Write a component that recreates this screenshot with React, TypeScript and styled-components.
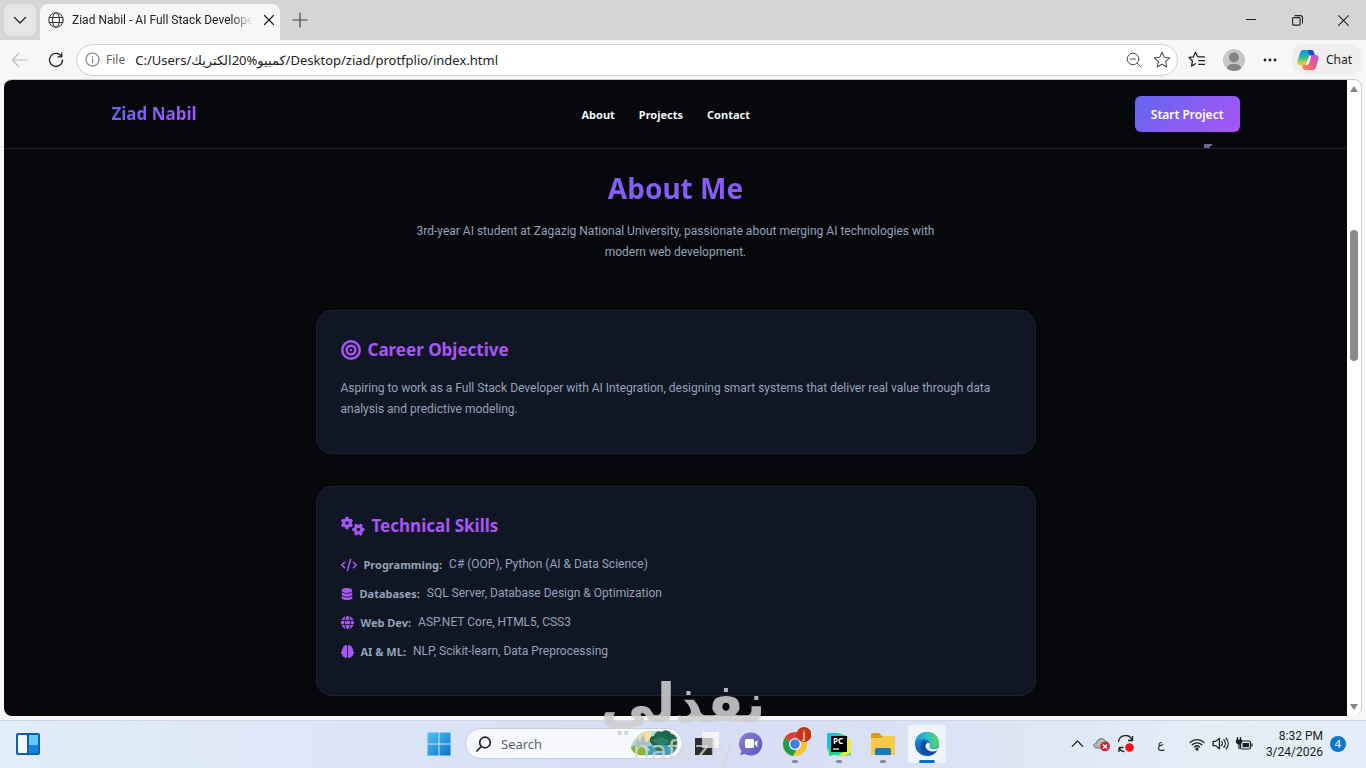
import React from "react";
import styled, { createGlobalStyle, css } from "styled-components";
import { FaBrain, FaBullseye, FaCode, FaDatabase, FaGears, FaGlobe } from "react-icons/fa6";

const ui = `"Noto Sans", "Open Sans", "DejaVu Sans", sans-serif`;
const reading = `Roboto, "Noto Sans", sans-serif`;
const accent = "#a855f7";
const gradient = "linear-gradient(135deg, #6366f1, #a855f7)";

const Global = createGlobalStyle`
  * { box-sizing: border-box; }
  body { margin: 0; font-family: ${ui}; overflow: hidden; }
  h1, h2, h3, p, ul { margin: 0; padding: 0; }
  button, input { font-family: inherit; }
  svg { display: block; flex: none; }
`;

const Desktop = styled.div`
  position: relative;
  height: 100vh;
  display: flex;
  flex-direction: column;
  background: #f7f7f7;
  overflow: hidden;
`;

/* ---------- browser chrome ---------- */

const TabStrip = styled.div`
  display: flex;
  height: 40px;
  flex: none;
  background: #d5d5d5;
  padding-left: 4px;
`;

const IconButton = styled.button<{ $w?: number; $h?: number; $bg?: string }>`
  display: flex;
  align-items: center;
  justify-content: center;
  flex: none;
  width: ${(p) => p.$w ?? 36}px;
  height: ${(p) => p.$h ?? 32}px;
  padding: 0;
  border: 0;
  border-radius: 8px;
  color: #222;
  background: ${(p) => p.$bg ?? "transparent"};
`;

const TabMenuSlot = styled.div`
  padding: 4px 4px 0 0;
`;

const Tab = styled.div`
  display: flex;
  align-items: center;
  gap: 8px;
  width: 240px;
  height: 36px;
  margin-top: 4px;
  padding: 0 8px 4px 8px;
  background: #f7f7f7;
  border-radius: 8px 8px 0 0;
`;

const TabTitle = styled.span`
  flex: 1;
  white-space: nowrap;
  font-family: ${reading};
  font-size: 12px;
  line-height: 20px;
  color: #222;
  mask-image: linear-gradient(90deg, #000 88%, transparent);
`;

const WindowControls = styled.div`
  display: flex;
  margin-left: auto;
`;

const Toolbar = styled.div`
  display: flex;
  align-items: center;
  height: 39px;
  flex: none;
  padding: 0 4px 0 2px;
`;

const AddressBar = styled.div`
  display: flex;
  align-items: center;
  flex: 1;
  height: 32px;
  margin-left: 2px;
  padding: 0 1px 0 8px;
  border: 1px solid #cfcfcf;
  border-radius: 16px;
  background: #fff;
`;

const Scheme = styled.label`
  display: flex;
  align-items: center;
  gap: 6px;
  font-size: 12px;
  color: #666;
`;

const UrlInput = styled.input`
  flex: 1;
  min-width: 0;
  border: 0;
  outline: 0;
  padding: 0;
  margin-left: 10px;
  background: transparent;
  font-size: 13px;
  color: #222;
`;

const ChatButton = styled.button`
  display: flex;
  align-items: center;
  gap: 7px;
  height: 31px;
  margin-left: 4px;
  padding: 0 10px 0 5px;
  border: 0;
  border-radius: 12px;
  background: #efefef;
  font-size: 12px;
  color: #222;
`;

/* ---------- web page ---------- */

const Viewport = styled.div`
  display: flex;
  flex: 1;
  min-height: 0;
  margin: 0 4px 4px;
  border-top: 1px solid #c9c9c9;
  border-right: 1px solid #d0d0d0;
  border-radius: 8px;
  overflow: hidden;
  background: #fff;
`;

const Page = styled.div`
  flex: 1;
  overflow: hidden;
  background: #06080c;
`;

const Header = styled.header`
  position: relative;
  display: flex;
  align-items: center;
  justify-content: space-between;
  height: 69px;
  padding: 0 8%;
  border-bottom: 1px solid #202329;
`;

const Brand = styled.a`
  font-size: 17px;
  line-height: 24px;
  font-weight: 700;
  text-decoration: none;
  color: transparent;
  background: ${gradient};
  background-clip: text;
`;

const Nav = styled.nav`
  display: flex;
  gap: 24px;
`;

const NavLink = styled.a`
  font-size: 11px;
  font-weight: 700;
  text-decoration: none;
  color: #f1f5f9;
`;

const StartButton = styled.button`
  height: 36px;
  padding: 0 16px;
  border: 0;
  border-radius: 6px;
  font-size: 12px;
  font-weight: 600;
  color: #fff;
  background: ${gradient};
`;

const PointerTrace = styled.svg`
  position: absolute;
  right: 135px;
  bottom: 0;
`;

const About = styled.section`
  display: flex;
  flex-direction: column;
  align-items: center;
  padding-top: 19px;
`;

const Title = styled.h1`
  width: 100%;
  text-align: center;
  font-size: 28px;
  line-height: 40px;
  font-weight: 700;
  color: transparent;
  background: ${gradient};
  background-clip: text;
`;

const bodyText = css`
  font-family: ${reading};
  font-size: 12px;
  line-height: 21px;
  color: #94a3b8;
`;

const Intro = styled.p`
  ${bodyText}
  max-width: 540px;
  margin: 13px 0 47px;
  text-align: center;
`;

const Card = styled.article`
  width: 720px;
  max-width: 90%;
  margin-bottom: 32px;
  padding: 24px 24px 33px 24px;
  border: 1px solid #1c2438;
  border-radius: 16px;
  background: #111625;
`;

const CardTitle = styled.h2`
  display: flex;
  align-items: center;
  gap: 7px;
  margin-bottom: 13px;
  font-size: 17px;
  line-height: 30px;
  font-weight: 700;
  color: ${accent};
`;

const CardText = styled.p`
  ${bodyText}
`;

const SkillList = styled.ul`
  display: flex;
  flex-direction: column;
  gap: 8px;
  list-style: none;
`;

const Skill = styled.li`
  ${bodyText}
  display: flex;
  align-items: center;
  gap: 7px;
  svg { color: ${accent}; }
  strong {
    font-family: ${ui};
    font-size: 11px;
    font-weight: 700;
  }
`;

const Scrollbar = styled.div`
  display: flex;
  flex-direction: column;
  align-items: center;
  width: 14px;
  padding: 5px 0;
`;

const Thumb = styled.div`
  width: 8px;
  flex: 0 0 21%;
  margin-top: 137px;
  margin-bottom: auto;
  border-radius: 4px;
  background: #8a8a8a;
`;

/* ---------- taskbar ---------- */

const Taskbar = styled.footer`
  display: grid;
  grid-template-columns: 1fr auto 1fr;
  align-items: center;
  height: 48px;
  flex: none;
  padding-bottom: 2px;
  border-top: 1px solid #cfd6e2;
  background: linear-gradient(90deg, #e1edf8 0%, #dbe4f6 30%, #d7ddf5 50%, #dbe3f4 70%, #e3eef7 88%, #e2edf7 100%);
`;

const Group = styled.div<{ $end?: boolean }>`
  display: flex;
  align-items: center;
  justify-content: ${(p) => (p.$end ? "flex-end" : "flex-start")};
  padding-left: ${(p) => (p.$end ? 0 : 6)}px;
  padding-right: ${(p) => (p.$end ? 20 : 0)}px;
`;

const Center = styled.div`
  display: flex;
  align-items: center;
`;

const AppButton = styled.button<{ $active?: boolean; $running?: boolean }>`
  position: relative;
  display: flex;
  align-items: center;
  justify-content: center;
  width: ${(p) => (p.$active ? 38 : 44)}px;
  margin: 0 ${(p) => (p.$active ? 3 : 0)}px;
  height: 38px;
  padding: 0;
  border: 0;
  border-radius: 4px;
  background: ${(p) => (p.$active ? "#f0f4fc" : "transparent")};
  &::after {
    content: "";
    display: ${(p) => (p.$active || p.$running ? "block" : "none")};
    position: absolute;
    bottom: 0;
    width: ${(p) => (p.$active ? 16 : 6)}px;
    height: 3px;
    border-radius: 2px;
    background: ${(p) => (p.$active ? "#0a6fc2" : "#858a96")};
  }
`;

const SearchBox = styled.label`
  display: flex;
  align-items: center;
  width: 218px;
  height: 31px;
  margin: 0 2px 0 4px;
  padding-left: 10px;
  border: 1px solid #c8cfe2;
  border-radius: 16px;
  background: #f7f9fe;
  overflow: hidden;
`;

const SearchInput = styled.input`
  flex: 1;
  min-width: 0;
  margin-left: 9px;
  padding: 0;
  border: 0;
  outline: 0;
  background: transparent;
  font-size: 13px;
  &::placeholder { color: #5d5f66; opacity: 1; }
`;

const TrayButton = styled(IconButton)`
  border-radius: 4px;
`;

const Language = styled.span`
  width: 46px;
  text-align: center;
  font-size: 12px;
  color: #222;
`;

const Clock = styled.div`
  margin: 0 7px 0 8px;
  text-align: right;
  font-family: ${reading};
  font-size: 12px;
  line-height: 16px;
  color: #1c1c1c;
`;

const Count = styled.span`
  width: 16px;
  height: 16px;
  border-radius: 8px;
  background: #0b78d0;
  color: #fff;
  text-align: center;
  font-size: 11px;
  line-height: 16px;
`;

const Watermark = styled.svg`
  position: absolute;
  left: 50%;
  bottom: 0;
  transform: translateX(-50%);
  pointer-events: none;
`;

type LineProps = { size?: number; w?: number; color?: string; box?: number; children: React.ReactNode };
const Line = ({ size = 16, w = 1.2, color = "currentColor", box = 16, children }: LineProps) => (
  <svg width={size} height={size} viewBox={`0 0 ${box} ${box}`} fill="none" stroke={color} strokeWidth={w} strokeLinecap="round" strokeLinejoin="round">
    {children}
  </svg>
);

const StarPath = "M8 1.2 10 5.6 14.8 6.1 11.2 9.4 12.2 14.2 8 11.7 3.8 14.2 4.8 9.4 1.2 6.1 6 5.6Z";

const Copilot = () => (
  <svg width="22" height="22" viewBox="0 0 22 22">
    <defs>
      <linearGradient id="cpA" x1="0" y1="0" x2="0" y2="1">
        <stop offset="0" stopColor="#1796e0" /><stop offset=".45" stopColor="#22b3b0" /><stop offset=".8" stopColor="#b6d33a" /><stop offset="1" stopColor="#f2c230" />
      </linearGradient>
      <linearGradient id="cpB" x1="1" y1="0" x2="0" y2="1">
        <stop offset="0" stopColor="#a855e8" /><stop offset=".5" stopColor="#ee5a88" /><stop offset="1" stopColor="#ff8b3d" />
      </linearGradient>
    </defs>
    <path d="M6 1h8c2 0 2.500 1 3 3l.7 2h-3.200c-1.500 0-2.300.8-2.700 2.300L10 14c-.5 1.500-1 2.300-2.500 2.300H3.500C.8 16.300-.1 14.500.6 12L3 4c.5-2 1.400-3 3-3Z" fill="url(#cpA)" />
    <path d="M11 1h3c2 0 2.500 1 3 3l.7 2h-3.500c-1.500 0-2.200-.8-2.500-2Z" fill="#1d4fc4" />
    <path d="M16 21H8.500c-2 0-2.500-1-3-3L5 16.300h2.500c1.500 0 2-.8 2.500-2.300l1.800-5.700C12.200 6.800 13 6 14.500 6h4c2.700 0 3.600 1.800 2.900 4.300L19 18c-.5 2-1.400 3-3 3Z" fill="url(#cpB)" />
    <path d="M12.600 6.500 8.700 15.500l1.400.500c1.200-.2 1.700-1 2.100-2.200l1.900-6.200Z" fill="#fff" />
  </svg>
);

const Edge = () => (
  <svg width="26" height="26" viewBox="0 0 26 26">
    <defs>
      <linearGradient id="edA" x1="0" y1="0" x2="1" y2="0"><stop offset="0" stopColor="#1795dc" /><stop offset=".5" stopColor="#2fc0cf" /><stop offset="1" stopColor="#5bd65a" /></linearGradient>
      <linearGradient id="edB" x1="0" y1="0" x2="0" y2="1"><stop offset="0" stopColor="#1b96dc" /><stop offset="1" stopColor="#1157a8" /></linearGradient>
    </defs>
    <circle cx="13" cy="13" r="12" fill="url(#edB)" />
    <path d="M1 12C1.500 5.500 6.700 1 13 1c7 0 12 5 12 10.500 0 4-3 6-6 6-2.500 0-4-1-4-2s1-1.400 1-3c0-2.500-2.600-4.500-6-4.500C6 8 2 9.500 1 12Z" fill="url(#edA)" />
    <path d="M10 9c-3 2-4.500 5-3 9 1.300 3.600 4.500 6.500 8.500 6.800 3-.6 6-2.600 7.500-5.300-4.500 2-10 .5-11.500-3-.8-2 0-3.500 1.200-4.500Z" fill="#0f4c9c" />
    <path d="M15 15.500c0 1 1.500 2.500 4.500 2.500 2 0 3.700-.6 4.600-1.500L23 19.500c-4.500 2-10 .5-11.200-3-.6-2 .2-3.800 1.700-4.500 1.500-.5 2.700.5 2.300 2Z" fill="#e9f1fb" />
  </svg>
);

const skills = [
  { icon: <FaCode size={16} />, name: "Programming:", text: "C# (OOP), Python (AI & Data Science)" },
  { icon: <FaDatabase size={12} />, name: "Databases:", text: "SQL Server, Database Design & Optimization" },
  { icon: <FaGlobe size={13} />, name: "Web Dev:", text: "ASP.NET Core, HTML5, CSS3" },
  { icon: <FaBrain size={13} />, name: "AI & ML:", text: "NLP, Scikit-learn, Data Preprocessing" },
];

const Browser = () => (
  <>
    <TabStrip>
      <TabMenuSlot>
        <IconButton $w={32} $bg="#e6e6e6" aria-label="Tab actions"><Line><path d="M2.500 5.500 8 11l5.500-5.500" /></Line></IconButton>
      </TabMenuSlot>
      <Tab>
        <Line size={16} w={1} color="#333">
          <circle cx="8" cy="8" r="7.200" /><ellipse cx="8" cy="8" rx="3.500" ry="7.200" /><path d="M1.200 5.500h13.600M1.200 10.500h13.600" />
        </Line>
        <TabTitle>Ziad Nabil - AI Full Stack Develope</TabTitle>
        <IconButton $w={16} $h={20} aria-label="Close tab"><Line size={12} w={1.6}><path d="M2 2l12 12M14 2 2 14" /></Line></IconButton>
      </Tab>
      <IconButton $w={40} $h={40} aria-label="New tab"><Line w={1.2} color="#444"><path d="M8 1v14M1 8h14" /></Line></IconButton>
      <WindowControls>
        <IconButton $w={46} $h={40} aria-label="Minimize"><Line size={10} box={10} w={1}><path d="M0 4.500h10" /></Line></IconButton>
        <IconButton $w={46} $h={40} aria-label="Restore"><Line size={11} box={11} w={1.1}><rect x=".6" y="2.600" width="7.500" height="7.500" rx="1" /><path d="M3 .6h5.500a2 2 0 0 1 2 2V8" /></Line></IconButton>
        <IconButton $w={46} $h={40} aria-label="Close"><Line size={11} box={11} w={1.1}><path d="M.6.6l9.800 9.800M10.400.6.6 10.400" /></Line></IconButton>
      </WindowControls>
    </TabStrip>
    <Toolbar>
      <IconButton aria-label="Back"><Line size={18} w={1} color="#bdbdbd"><path d="M15 8H1.500M7 2 1.200 8 7 14" /></Line></IconButton>
      <IconButton aria-label="Refresh"><Line w={1.3}><path d="M13.500 4.500A6.500 6.500 0 1 0 14.500 8M13.800 1v3.800H10" /></Line></IconButton>
      <AddressBar>
        <Scheme htmlFor="url">
          <Line size={15} color="#777"><circle cx="8" cy="8" r="7" /><path d="M8 7.300V11.500M8 4.700v.1" /></Line>
          File
        </Scheme>
        <UrlInput id="url" dir="ltr" spellCheck={false} defaultValue="C:/Users/كمبيو%20الكتريك/Desktop/ziad/protfplio/index.html" />
        <IconButton $w={28} aria-label="Zoom" $h={28}><Line w={1} color="#555"><circle cx="7" cy="7" r="5.800" /><path d="M4.500 7h5M11.300 11.300 15 15" /></Line></IconButton>
        <IconButton $w={28} aria-label="Add to favorites" $h={28}><Line size={18} w={1} color="#555"><path d={StarPath} /></Line></IconButton>
      </AddressBar>
      <IconButton $w={38} aria-label="Favorites"><Line size={17}><path d="M9.500 5.500 8.900 5 7 1.200 5 5.600 1 6.100 4.200 9.400 3.300 14.200 7 12M10 5.500h5.500M10 9h5.500M10 12.500h5.500" /></Line></IconButton>
      <IconButton $w={36} aria-label="Profile">
        <svg width="22" height="22" viewBox="0 0 22 22"><circle cx="11" cy="11" r="11" fill="#c9c7c5" /><circle cx="11" cy="8.500" r="5" fill="#858381" /><path d="M4 19.500c0-3.500 3-4.500 7-4.500s7 1 7 4.500A11 11 0 0 1 4 19.500Z" fill="#858381" /></svg>
      </IconButton>
      <IconButton $w={36} aria-label="Settings and more"><svg width="14" height="4" fill="#222"><circle cx="2" cy="2" r="1.400" /><circle cx="7" cy="2" r="1.400" /><circle cx="12" cy="2" r="1.400" /></svg></IconButton>
      <ChatButton><Copilot />Chat</ChatButton>
    </Toolbar>
  </>
);

const Portfolio = () => (
  <Page>
    <Header>
      <Brand href="#top">Ziad Nabil</Brand>
      <Nav>
        <NavLink href="#about">About</NavLink>
        <NavLink href="#projects">Projects</NavLink>
        <NavLink href="#contact">Contact</NavLink>
      </Nav>
      <StartButton>Start Project</StartButton>
      <PointerTrace width="8" height="4"><path d="M0 0h8v2H6v2H0Z" fill="#6c6693" /></PointerTrace>
    </Header>
    <About id="about">
      <Title>About Me</Title>
      <Intro>3rd-year AI student at Zagazig National University, passionate about merging AI technologies with modern web development.</Intro>
      <Card>
        <CardTitle><FaBullseye size={20} />Career Objective</CardTitle>
        <CardText>Aspiring to work as a Full Stack Developer with AI Integration, designing smart systems that deliver real value through data analysis and predictive modeling.</CardText>
      </Card>
      <Card>
        <CardTitle><FaGears size={24} />Technical Skills</CardTitle>
        <SkillList>
          {skills.map((s) => (
            <Skill key={s.name}>{s.icon}<strong>{s.name}</strong><span>{s.text}</span></Skill>
          ))}
        </SkillList>
      </Card>
    </About>
  </Page>
);

const Tasks = () => (
  <Taskbar>
    <Group>
      <AppButton aria-label="Widgets">
        <svg width="24" height="22" viewBox="0 0 24 22"><rect width="24" height="22" rx="2" fill="#0f62a8" /><rect x="2" y="2" width="9" height="18" rx="1" fill="#f4f8fb" /><rect x="13" y="2" width="9" height="10" fill="#63c9fb" /><rect x="13" y="12" width="9" height="8" fill="#1481dc" /></svg>
      </AppButton>
    </Group>
    <Center>
      <AppButton aria-label="Start">
        <svg width="24" height="24" viewBox="0 0 24 24"><defs><linearGradient id="win" x1="0" y1="0" x2="1" y2="1"><stop offset="0" stopColor="#4fc3f0" /><stop offset="1" stopColor="#0a72d0" /></linearGradient></defs><path d="M.5.5h11v11H.5ZM12.500.5h11v11h-11ZM.5 12.500h11v11H.5ZM12.500 12.500h11v11h-11Z" fill="url(#win)" /></svg>
      </AppButton>
      <SearchBox htmlFor="search">
        <Line w={1.7} color="#222"><circle cx="9" cy="6.500" r="5.300" /><path d="M5.200 10.500 1 15" /></Line>
        <SearchInput id="search" placeholder="Search" />
        <svg width="54" height="29" viewBox="0 0 54 29">
          <path d="M3 17C8 6 14 2 22 2c6 0 10 1 14-1 7 0 13 5 14 13 0 7-6 12-12 12H14C8 26 3 22 3 17Z" fill="#a9dcd4" />
          <path d="M8 12C12 3 18 2 24 3l-1 12-14 2Z" fill="#f6dfa0" />
          <path d="M7 16l3-7 2 4 3-8 3 9 3-3 2 7Z" fill="#a8bfd0" />
          <path d="M22 13c-1-4 1-6 4-6 1-4 5-6 8-4 4-3 8-1 9 2 4 0 7 4 6 8 0 3-3 3-5 3l-12 3-8-3Z" fill="#1f6650" />
          <path d="M25 12c1-3 4-3 5-2 1-3 5-3 6 0 3-1 5 1 4 4l-7 3Z" fill="#2f8261" />
          <path d="M3 18c4-3 10-2 14 1s6 4 9 3l-8 4c-7 1-14-1-15-8Z" fill="#86b53c" />
          <path d="M19 18c7-3 20-2 30-1-1 6-5 9-11 9H15c6-2 10-4 4-8Z" fill="#3c9dbd" />
          <path d="M25 18l9-1 3 5-5 2ZM42 16l7-2-2 7Z" fill="#39743d" />
        </svg>
      </SearchBox>
      <AppButton aria-label="Task view">
        <svg width="24" height="23" viewBox="0 0 24 23"><rect x="7" width="17" height="16" fill="#f5f5f5" /><rect y="6" width="18" height="17" fill="#2c2c2c" /><rect x="7" y="6" width="11" height="10" fill="#bdbdbd" /></svg>
      </AppButton>
      <AppButton aria-label="Meetings">
        <svg width="24" height="24" viewBox="0 0 24 24"><defs><linearGradient id="meet" x1="0" y1="0" x2="1" y2="1"><stop offset="0" stopColor="#8a80c9" /><stop offset="1" stopColor="#5c56c4" /></linearGradient></defs><path d="M12 .5a11.500 11.500 0 1 1-6 21.400L1 23l1.500-4A11.500 11.500 0 0 1 12 .5Z" fill="url(#meet)" /><rect x="6" y="7" width="9" height="9" rx="1.500" fill="#fff" /><path d="m15.500 10.500 3-2.500v7l-3-2.500Z" fill="#fff" /></svg>
      </AppButton>
      <AppButton $running aria-label="Chrome">
        <svg width="32" height="34" viewBox="0 0 32 34">
          <g transform="translate(0 2)">
            <circle cx="16" cy="15" r="12" fill="#f9c52c" />
            <path d="M16 15 5.600 9A12 12 0 0 1 26.400 9Z" fill="#de4032" />
            <path d="M5.600 9 16 15l1.500 5-3.500 6.900A12 12 0 0 1 5.600 9Z" fill="#259a4e" />
            <circle cx="16" cy="15" r="6" fill="#fff" /><circle cx="16" cy="15" r="4.800" fill="#3f7de8" />
            <circle cx="25" cy="5.500" r="7.500" fill="#c03617" />
            <text x="25" y="9" textAnchor="middle" fontSize="10" fill="#fff">j</text>
          </g>
        </svg>
      </AppButton>
      <AppButton $running aria-label="PyCharm">
        <svg width="26" height="26" viewBox="0 0 26 26"><path d="M1 2h11l9 3 4 8v11l-9 1-8-1-5 1Z" fill="#23d18a" /><path d="M1 2h11l-3 9-8 8Z" fill="#16c4e4" /><path d="m20 6 5 3v13l-7 3-6-1 8-4Z" fill="#e9ec3a" /><rect x="5" y="5" width="16" height="16" fill="#000" /><text x="7" y="13" fontSize="8" fontWeight="700" fill="#fff">PC</text><path d="M7 18h6" stroke="#fff" strokeWidth="1.300" /></svg>
      </AppButton>
      <AppButton $running aria-label="File Explorer">
        <svg width="26" height="24" viewBox="0 0 26 24"><path d="M1 3a2 2 0 0 1 2-2h6l3 3h12a1 1 0 0 1 1 1v6H1Z" fill="#d99a1d" /><path d="M1 6h10l2-2h11a1 1 0 0 1 1 1v17a1 1 0 0 1-1 1H1Z" fill="#fbc94a" /><path d="M5 23v-5a2 2 0 0 1 2-2h12a2 2 0 0 1 2 2v5Z" fill="#1d78bf" /></svg>
      </AppButton>
      <AppButton $active aria-label="Edge"><Edge /></AppButton>
    </Center>
    <Group $end>
      <TrayButton $w={24} aria-label="Show hidden icons"><Line size={13} w={1.6} color="#222"><path d="M1.500 11.500 8 5l6.500 6.500" /></Line></TrayButton>
      <TrayButton $w={24} aria-label="Cloud storage">
        <svg width="17" height="16" viewBox="0 0 17 16"><path d="M4 12C0 12 0 7.500 3.500 7 4 2 11 1 12.500 5.500 17 5.500 17 12 13 12Z" fill="#b8b8b8" stroke="#666" /><circle cx="12" cy="10.500" r="4.800" fill="#c5283d" /><path d="m10 8.500 4 4m0-4-4 4" stroke="#fff" strokeWidth="1.300" /></svg>
      </TrayButton>
      <TrayButton $w={24} aria-label="Updates">
        <svg width="18" height="18" viewBox="0 0 18 18" fill="none" stroke="#222" strokeWidth="1.300"><path d="M1.500 7A7 7 0 0 1 15 5M15.500 1v4.500H11M2 12.500h4.500M2 12.500V17M2.500 13.500c1 2 3 3 5 3.200" /><circle cx="12.500" cy="12.500" r="4.300" fill="#fb0d0d" stroke="none" /></svg>
      </TrayButton>
      <Language>ع</Language>
      <TrayButton $w={26} aria-label="Wi-Fi"><Line color="#222" w={1.3}><path d="M1 6.500a10 10 0 0 1 14 0M3.200 8.800a7 7 0 0 1 9.600 0M5.400 11a3.800 3.800 0 0 1 5.200 0" /><circle cx="8" cy="13" r="1" fill="#222" /></Line></TrayButton>
      <TrayButton $w={22} aria-label="Volume"><Line size={17} color="#222"><path d="M1 6v4h2.500L7 13V3L3.500 6ZM9 6c1 1 1 3 0 4M11.200 4.500c1.800 2 1.800 5 0 7M13.300 3c2.600 3 2.600 7 0 10" /></Line></TrayButton>
      <TrayButton $w={26} aria-label="Battery">
        <svg width="17" height="14" viewBox="0 0 17 14" fill="none" stroke="#222" strokeWidth="1.200"><path d="M1.500 0v3M4.500 0v3M.5 3h5v2.500L4 7H2L.5 5.500ZM3 7v5" fill="#222" /><rect x="4.500" y="4" width="10" height="8" rx="1.500" /><rect x="6.500" y="6" width="6.500" height="4.200" fill="#222" stroke="none" /><path d="M16 6.500v3" /></svg>
      </TrayButton>
      <Clock>8:32 PM<br />3/24/2026</Clock>
      <Count>4</Count>
    </Group>
  </Taskbar>
);

export default function App() {
  return (
    <Desktop>
      <Global />
      <Browser />
      <Viewport>
        <Portfolio />
        <Scrollbar>
          <svg width="8" height="8"><path d="M4 1 8 7H0Z" fill="#858585" /></svg>
          <Thumb />
          <svg width="8" height="8"><path d="M4 7 0 1h8Z" fill="#858585" /></svg>
        </Scrollbar>
      </Viewport>
      <Tasks />
      <Watermark width="180" height="108" viewBox="0 0 180 108" fontFamily='"DejaVu Sans", sans-serif' textAnchor="middle">
        <text x="90" y="62" fontSize="54" fontWeight="700" fill="#cfcfd0" opacity=".88">نفذلي</text>
        <text x="90" y="101" fontSize="28" fill="#d9d9d9" opacity=".75">nafezly</text>
      </Watermark>
    </Desktop>
  );
}
